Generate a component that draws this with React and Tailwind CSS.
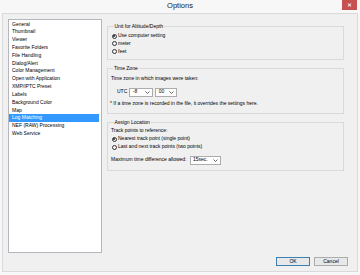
import React from 'react';

const pages = [
  'General',
  'Thumbnail',
  'Viewer',
  'Favorite Folders',
  'File Handling',
  'Dialog/Alert',
  'Color Management',
  'Open with Application',
  'XMP/IPTC Preset',
  'Labels',
  'Background Color',
  'Map',
  'Log Matching',
  'NEF (RAW) Processing',
  'Web Service',
];

const Chevron = () => (
  <svg width="5" height="3" viewBox="0 0 5 3" className="shrink-0">
    <polyline points="0.5,0.5 2.5,2.5 4.5,0.5" fill="none" stroke="#444" strokeWidth="0.8" />
  </svg>
);

const Radio = ({ checked, label }) => (
  <div className="flex items-center h-[7.84px]">
    <span className="w-[5px] h-[5px] rounded-full border-[0.7px] border-[#333] bg-[#f4f4f4] flex items-center justify-center shrink-0">
      {checked && <span className="w-[2.2px] h-[2.2px] rounded-full bg-[#1a1a1a]" />}
    </span>
    <span className="ml-[1.5px]">{label}</span>
  </div>
);

const Select = ({ value, width }) => (
  <div
    className="h-[9px] bg-white border-[0.7px] border-[#acacac] flex items-center justify-between pl-[2.5px] pr-[2px]"
    style={{ width }}
  >
    <span>{value}</span>
    <Chevron />
  </div>
);

const Group = ({ title, children, className }) => (
  <fieldset className={'border-[0.7px] border-[#d9d9d9] ' + (className || '')}>
    <legend className="ml-[2px] px-[1px] leading-[7.84px]">{title}</legend>
    {children}
  </fieldset>
);

export default function App() {
  return (
    <div className="w-[360px] h-[275px] bg-[#f7f7f7] flex flex-col font-['Liberation_Sans',Arial,sans-serif] text-[5px] leading-[7.84px] text-black overflow-hidden">
      {/* title bar */}
      <div className="h-[13px] relative flex items-center justify-center shrink-0">
        <span className="text-[7.5px] leading-none text-[#222] -mt-[1px]">Options</span>
        <div className="absolute right-[3px] top-0 w-[15px] h-[10px] bg-[#c75050] flex items-center justify-center">
          <svg width="5" height="4" viewBox="0 0 5 4">
            <path d="M0.8 0.5 L4.2 3.5 M4.2 0.5 L0.8 3.5" stroke="#fff" strokeWidth="1" />
          </svg>
        </div>
      </div>

      {/* body */}
      <div className="flex-1 mx-[2px] mb-[3px] border border-[#dadada] bg-[#f0f0f0] flex flex-col">
        <div className="flex gap-[5px] pt-[5px] pl-[5px]">
          {/* page list */}
          <div className="w-[94px] h-[234px] bg-white border border-[#b4b7bd] py-[0.5px] shrink-0">
            {pages.map((p) =>
              p === 'Log Matching' ? (
                <div key={p} className="h-[7.84px] pl-[3px] mr-[2px] bg-[#3399ff] text-white">
                  {p}
                </div>
              ) : (
                <div key={p} className="h-[7.84px] pl-[3px]">
                  {p}
                </div>
              )
            )}
          </div>

          {/* settings */}
          <div className="w-[237px] pt-[3.5px] flex flex-col gap-[4.5px]">
            <Group title="Unit for Altitude/Depth" className="pl-[3.5px] pt-[1.8px] pb-[3.5px]">
              <Radio checked label="Use computer setting" />
              <Radio label="meter" />
              <Radio label="feet" />
            </Group>

            <Group title="Time Zone" className="pl-[3px] pt-[2.2px] pb-[5px]">
              <div>Time zone in which images were taken:</div>
              <div className="flex items-center mt-[5.4px] ml-[6px]">
                <span>UTC</span>
                <div className="ml-[2px] flex gap-[2px]">
                  <Select value="-8" width="24px" />
                  <Select value="00" width="22px" />
                </div>
              </div>
              <div className="mt-[3.4px] -ml-[1px]">
                * If a time zone is recorded in the file, it overrides the settings here.
              </div>
            </Group>

            <Group title="Assign Location" className="pl-[3.5px] pt-[0.5px] pb-[5.5px]">
              <div className="-ml-[0.5px]">Track points to reference:</div>
              <div className="mt-[0.5px]">
                <Radio checked label="Nearest track point (single point)" />
                <Radio label="Last and next track points (two points)" />
              </div>
              <div className="flex items-center gap-[3px] mt-[4.8px] -ml-[0.5px]">
                <span>Maximum time difference allowed:</span>
                <Select value="15sec." width="31px" />
              </div>
            </Group>
          </div>
        </div>

        {/* buttons */}
        <div className="flex justify-end gap-[4px] pr-[9px] mt-[4px]">
          <button className="w-[34px] h-[9px] border-[0.7px] border-[#3c7fb1] bg-[#e8e8e8] flex items-center justify-center leading-none">
            OK
          </button>
          <button className="w-[34px] h-[9px] border-[0.7px] border-[#acacac] bg-[#e8e8e8] flex items-center justify-center leading-none">
            Cancel
          </button>
        </div>
      </div>
    </div>
  );
}
